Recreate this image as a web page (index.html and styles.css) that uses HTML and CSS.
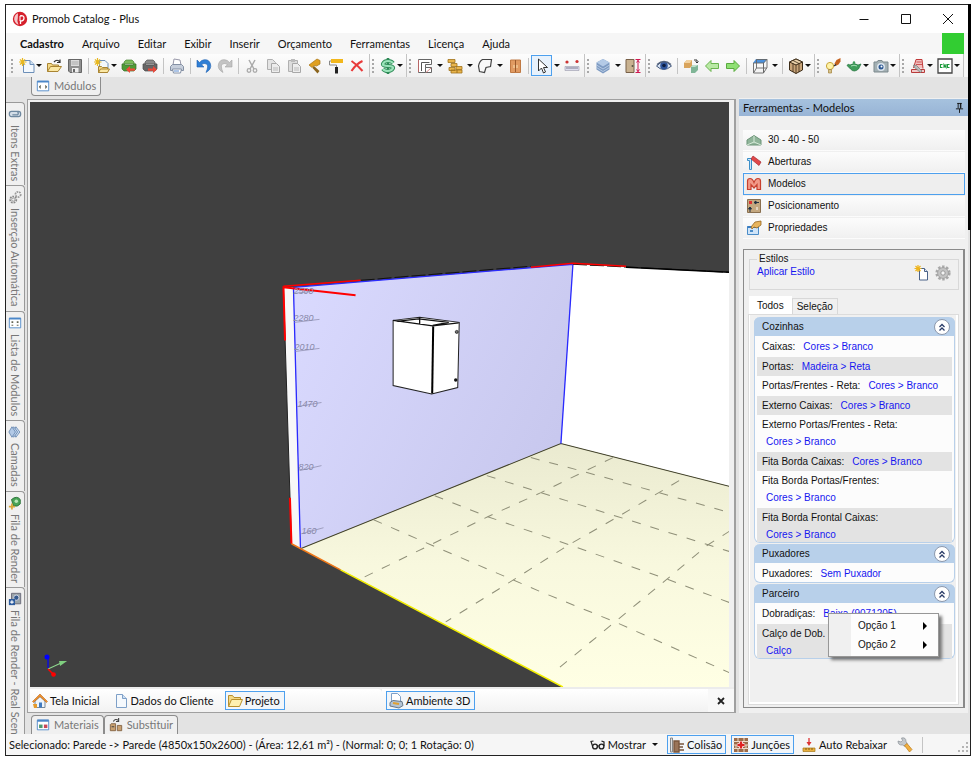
FILE: index.html
```html
<!DOCTYPE html>
<html lang="pt-BR">
<head>
<meta charset="utf-8">
<title>Promob Catalog - Plus</title>
<link rel="stylesheet" href="styles.css">
</head>
<body>
<div class="window">
  <header class="titlebar">
    <svg class="logo" viewBox="0 0 16 16"><circle cx="8" cy="8" r="7.2" fill="#d5202c"/><path d="M6 2.2Q2 4 2.2 8.5Q3 12.500 6.500 13.800Q4.600 10 5.800 7Z" fill="#fff" opacity=".75"/><path d="M8 5q4-1 4 2t-3.500 3v3" fill="none" stroke="#fff" stroke-width="1.300"/><path d="M8 5v5" stroke="#fff" stroke-width="1"/></svg>
    <h1>Promob Catalog - Plus</h1>
    <div class="winbuttons">
      <button aria-label="Minimizar"><svg viewBox="0 0 12 12"><path d="M1.500 6.500h9" stroke="#111"/></svg></button>
      <button aria-label="Maximizar"><svg viewBox="0 0 12 12"><path d="M1.500 1.500h9v9h-9z" fill="none" stroke="#111"/></svg></button>
      <button aria-label="Fechar"><svg viewBox="0 0 12 12"><path d="M1 1l10 10M11 1L1 11" stroke="#111"/></svg></button>
    </div>
  </header>

  <nav class="menubar">
    <button class="current">Cadastro</button><button>Arquivo</button><button>Editar</button><button>Exibir</button><button>Inserir</button><button>Orçamento</button><button>Ferramentas</button><button>Licença</button><button>Ajuda</button>
    <span class="led"></span>
  </nav>

  <div class="toolbar">
    <div class="group">
      <button class="tool split" aria-label="Novo"><svg viewBox="0 0 16 16"><path d="M4.500 2.500h6.500l4 4v8h-10.500z" fill="#f3f8fd" stroke="#6c8fb8"/><path d="M11 2.500v4h4" fill="#cfe0f2" stroke="#6c8fb8"/><path d="M3.500 0v8M-.5 4h8M1 1.300l5 5.400M6 1.300L1 6.700" stroke="#e8b820" stroke-width="1.200"/></svg><i></i></button>
      <button class="tool" aria-label="Abrir"><svg viewBox="0 0 16 16"><path d="M1.500 13.500v-8h4l1 1.500h6v2" fill="#f3d987" stroke="#a98432"/><path d="M1.500 13.500l3-5h11l-3.500 5z" fill="#fbe8a4" stroke="#a98432"/><path d="M8 4q3-3.500 6 0M14 1.500v3h-3" fill="none" stroke="#333" stroke-width="1.200"/></svg></button>
      <button class="tool" aria-label="Salvar"><svg viewBox="0 0 16 16"><path d="M1.500 1.500h13v13H3l-1.500-1.500z" fill="#909090" stroke="#666"/><path d="M4 2h8v6H4z" fill="#ddd"/><path d="M5 10h6.500v4.500H5z" fill="#eee"/><path d="M6 11h2v3H6z" fill="#666"/><path d="M4.500 4h7M4.500 6h7" stroke="#aaa"/></svg></button>
      <span class="sep"></span>
      <button class="tool split" aria-label="Novo projeto"><svg viewBox="0 0 16 16"><path d="M5.500 2.500h5.500l3 3v7h-8.500z" fill="#f3f8fd" stroke="#6c8fb8"/><path d="M4.500 14.500v-6h3l1 1h5v5z" fill="#f3d987" stroke="#a98432"/><path d="M4.500 14.500l2-3.500h9l-2 3.500z" fill="#fbe8a4" stroke="#a98432"/><path d="M3.500 0v8M-.5 4h8M1 1.300l5 5.400M6 1.300L1 6.700" stroke="#e8b820" stroke-width="1.200"/></svg><i></i></button>
      <button class="tool" aria-label="Importar módulo"><svg viewBox="0 0 16 16"><path d="M3 4l2-2h6l2 2v2H3z" fill="#7dbb5c" stroke="#4c8436" stroke-width=".7"/><path d="M1 6q2-1 3 1h8q1-2 3-1v5l-2 2H3l-2-2z" fill="#4f9a36" stroke="#3a7028" stroke-width=".7"/><path d="M14 10.500H9V8l-4 3.500L9 15v-2.300h5z" fill="#f04a3a"/></svg></button>
      <button class="tool" aria-label="Exportar módulo"><svg viewBox="0 0 16 16"><path d="M3 4l2-2h6l2 2v2H3z" fill="#8a8a8a" stroke="#555" stroke-width=".7"/><path d="M1 6q2-1 3 1h8q1-2 3-1v5l-2 2H3l-2-2z" fill="#666" stroke="#4a4a4a" stroke-width=".7"/><path d="M6 10.500h5V8l4 3.500-4 3.500v-2.300H6z" fill="#e8483a"/></svg></button>
      <span class="sep"></span>
      <button class="tool" aria-label="Imprimir"><svg viewBox="0 0 16 16"><path d="M4 7l1-6 6 1 1 5z" fill="#fff" stroke="#99a"/><path d="M1.500 8.500l2-2h9l2 2v4h-13z" fill="#c6cedb" stroke="#8490a4"/><path d="M3.500 11h9l-1 4h-7z" fill="#fff" stroke="#8490a4"/><path d="M5 13h5" stroke="#5a8bd0"/></svg></button>
      <span class="sep"></span>
      <button class="tool" aria-label="Desfazer"><svg viewBox="0 0 16 16"><path d="M1 2v7h7L5.500 6.700Q8 4.500 10.500 6T10 14.500Q16 11 14.500 6T8 1.800Q5.500 2 3.600 4.500z" fill="#2f7fd6" stroke="#1e5fae" stroke-width=".6"/></svg></button>
      <button class="tool" aria-label="Refazer"><svg viewBox="0 0 16 16"><path d="M15 2v7H8l2.500-2.300Q8 4.500 5.500 6T6 14.500Q0 11 1.500 6T8 1.800q2.500.2 4.400 2.700z" fill="#c4c4c4" stroke="#a4a4a4" stroke-width=".6"/></svg></button>
      <span class="sep"></span>
      <button class="tool" aria-label="Recortar"><svg viewBox="0 0 16 16"><path d="M5 2l5 9M11 2l-5 9" stroke="#aaa" stroke-width="1.500"/><circle cx="5" cy="12.500" r="1.800" fill="none" stroke="#aaa" stroke-width="1.300"/><circle cx="11" cy="12.500" r="1.800" fill="none" stroke="#aaa" stroke-width="1.300"/></svg></button>
      <button class="tool" aria-label="Copiar"><svg viewBox="0 0 16 16"><path d="M2.500 1.500h5l3 3v7h-8z" fill="#e4e4e4" stroke="#b0b0b0"/><path d="M6.500 5.500h5l3 3v6h-8z" fill="#ededed" stroke="#a8a8a8"/><path d="M8 10h5M8 12h5" stroke="#bbb"/></svg></button>
      <button class="tool" aria-label="Colar"><svg viewBox="0 0 16 16"><path d="M2.500 2.500h9v11h-9z" fill="#dcdcdc" stroke="#b0b0b0"/><path d="M5 1h4v3H5z" fill="#bbb"/><path d="M6.500 5.500h5l3 3v6h-8z" fill="#ededed" stroke="#a8a8a8"/><path d="M8 10h5M8 12h5" stroke="#bbb"/></svg></button>
      <button class="tool" aria-label="Montar"><svg viewBox="0 0 16 16"><path d="M2 7l8-6 3 1.500V6l-3.500 2-2-.5L5 9.500z" fill="#e0a020" stroke="#a87414" stroke-width=".7"/><path d="M7 8l5.500 5-2 2.500L5.500 10z" fill="#8a641c"/></svg></button>
      <button class="tool" aria-label="Pintar"><svg viewBox="0 0 16 16"><path d="M3 1h12v4H3z" fill="#f2b71c"/><path d="M3 3H1.500v4H8.500v3" fill="none" stroke="#888"/><path d="M7 9h3v6.500H7z" fill="#222"/></svg></button>
      <button class="tool" aria-label="Excluir"><svg viewBox="0 0 16 16"><path d="M2.500 3q6 4 11 10M13.500 3Q7 6 2.500 13" fill="none" stroke="#e83a3a" stroke-width="2"/></svg></button>
    </div>
    <div class="group">
      <button class="tool split" aria-label="Orçamento"><svg viewBox="0 0 16 16"><path d="M13 5.200Q11.500 3 8 3T3.200 5.400 8 8t4.800 2.600T8 13 3 10.800" fill="none" stroke="#2e8a57" stroke-width="4"/><path d="M8 0v16" stroke="#2e8a57" stroke-width="2.600"/><path d="M13 5.200Q11.500 3 8 3T3.200 5.400 8 8t4.800 2.600T8 13 3 10.800" fill="none" stroke="#9be4ba" stroke-width="2.200"/></svg><i></i></button>
    </div>
    <div class="group">
      <button class="tool split wide" aria-label="Paredes"><svg viewBox="0 0 16 16"><path d="M1.500 14.500v-13h13v5h-6v8z" fill="#fff" stroke="#666"/><path d="M4.500 13V4.500h8" fill="none" stroke="#555"/><path d="M8.500 9.500h6v5h-6z" fill="#fff" stroke="#666"/><path d="M1.500 2v12M9 14.500L14 10" stroke="#c66" stroke-width=".8"/></svg><i></i></button>
      <button class="tool split wide" aria-label="Construção"><svg viewBox="0 0 16 16"><path d="M1 1.500h7v3H1zM4 5.500h6v3H4zM2 9.500h6v3H2zM9 8.500h6v3H9zM4 12h11v3H4z" fill="#e9b54c" stroke="#a0721c" stroke-width=".8"/><path d="M10 12v3" stroke="#a0721c"/></svg><i></i></button>
      <button class="tool split wide" aria-label="Polígono"><svg viewBox="0 0 16 16"><path d="M5.500 1.500h9l-1 7-4.500 1-1.500 5-5-1-1-5.500q1-5 4-6.500z" fill="#f8f8f8" stroke="#444" stroke-width="1.200"/></svg><i></i></button>
      <button class="tool" aria-label="Portas"><svg viewBox="0 0 16 16"><path d="M3.500 2h10v12.500h-10z" fill="#e09a62" stroke="#c07a44"/><path d="M8.500 2v12" stroke="#9a5a2c"/><path d="M7 7v3M10 7v3" stroke="#fbe0b0"/></svg></button>
      <span class="sep"></span>
      <button class="tool split wide picked" aria-label="Selecionar"><svg viewBox="0 0 16 16"><path d="M4.500 1v12l3-3 2 5 2-1-2-4.500h4z" fill="#fff" stroke="#333"/></svg><i></i></button>
      <button class="tool" aria-label="Medir"><svg viewBox="0 0 16 16"><path d="M1 8.500h14v4H1z" fill="#dde" stroke="#99a" stroke-width=".6"/><path d="M3 9v2M5 9v2M7 9v2M9 9v2M11 9v2M13 9v2" stroke="#667" stroke-width=".8"/><circle cx="3" cy="4" r="1.600" fill="#c33"/><circle cx="13" cy="3.500" r="1.600" fill="#c33"/></svg></button>
    </div>
    <div class="group">
      <button class="tool split wide" aria-label="Camadas"><svg viewBox="0 0 16 16"><path d="M8 1l6.500 3.500v7L8 15.500l-6.500-4v-7z" fill="#7d9ac2"/><path d="M8 1l6.500 3.500L8 8.500 1.500 4.500z" fill="#b4cae6"/><path d="M1.500 7L8 11l6.500-4M1.500 9.500L8 13.500l6.500-4" fill="none" stroke="#c3d4ea" stroke-width=".8"/></svg><i></i></button>
      <button class="tool" aria-label="Altura de porta"><svg viewBox="0 0 16 16"><path d="M1 1.500h8v13H1z" fill="#c9b290" stroke="#786048"/><circle cx="7.500" cy="8" r="1" fill="#554"/><path d="M13 2v12M10.500 1.500h5M10.500 14.500h5M11.500 4.500L13 2.500l1.500 2M11.500 11.500L13 13.500l1.500-2" fill="none" stroke="#d01850"/></svg></button>
    </div>
    <div class="group">
      <button class="tool" aria-label="Visualizar"><svg viewBox="0 0 16 16"><path d="M.5 8q7-8 15 0-8 7-15 0z" fill="#d7e2f2" stroke="#44597c"/><circle cx="8" cy="7.800" r="3.800" fill="#2e559c"/><circle cx="8" cy="7.500" r="1.800" fill="#0c1d40"/><path d="M1 6.500q7-6 14 0" fill="none" stroke="#53627c" stroke-width="1.300"/></svg></button>
      <span class="sep"></span>
      <button class="tool" aria-label="Trocar módulos"><svg viewBox="0 0 16 16"><path d="M1 5l3-3h5v6l-2 2H1z" fill="#d9a45c"/><path d="M1 5l3-3h5L7 5z" fill="#f2d2a0"/><path d="M8 9l2-2h5v5l-3 3H8z" fill="#7fb596"/><path d="M8 9l2-2h5l-3 2z" fill="#bfe0cc"/><path d="M11 2h3v3M12.500 3.500L14 5l1.500-1.500" fill="none" stroke="#333"/></svg></button>
      <button class="tool" aria-label="Anterior"><svg viewBox="0 0 16 16"><path d="M1.500 8L7 2.500v3h7.500v5H7v3z" fill="#b9e9a4" stroke="#6ab44e"/></svg></button>
      <button class="tool" aria-label="Próximo"><svg viewBox="0 0 16 16"><path d="M14.500 8L9 2.500v3H1.500v5H9v3z" fill="#8fe073" stroke="#5aaa3e"/></svg></button>
      <span class="sep"></span>
      <button class="tool split wide" aria-label="Vista"><svg viewBox="0 0 16 16"><path d="M4 1h11l-3 4H1z" fill="#4a90dc"/><path d="M1.500 5h10v10h-10zM4.500 1.500h10.500v8L11.500 15V5l3.500-3.500M1.500 15L4.500 10H15M4.500 10V1.500" fill="none" stroke="#666" stroke-width=".9"/></svg><i></i></button>
      <span class="sep"></span>
      <button class="tool split" aria-label="Modo de exibição"><svg viewBox="0 0 16 16"><path d="M8 1l6.500 3v8L8 15.500 1.500 12V4z" fill="#c8a478" stroke="#3c2c18"/><path d="M1.500 4L8 7l6.500-3L8 1z" fill="#ecd4ac" stroke="#3c2c18"/><path d="M8 7v8.500M5 2.500L11 5.500v8.500M5 5.500V14" stroke="#3c2c18" stroke-width=".8" fill="none"/></svg><i></i></button>
    </div>
    <div class="group">
      <button class="tool" aria-label="Iluminação"><svg viewBox="0 0 16 16"><circle cx="5" cy="8" r="3.600" fill="#fff3a8" stroke="#c9a53a"/><path d="M3.500 11.500h3V15h-3z" fill="#d8c48c" stroke="#a08038" stroke-width=".7"/><path d="M9.500 5.500l2-3.500 4-2v3.500l-2 3-3 1.500z" fill="#c4621e"/><path d="M9 8l2-1.500" stroke="#333" stroke-width="1.500"/></svg></button>
      <button class="tool split" aria-label="Renderizar"><svg viewBox="0 0 16 16"><path d="M4 7q4-3 8 0l3-1-2.500 5q-4.500 4-8 0L1 7.500q1-2 3-.5z" fill="#3f9d5a" stroke="#23703c" stroke-width=".7"/><circle cx="8" cy="4.500" r="1.200" fill="#3f9d5a"/><path d="M5 8q3-1.500 6 0" stroke="#a6e0b5" fill="none"/></svg><i></i></button>
      <button class="tool split" aria-label="Câmera"><svg viewBox="0 0 16 16"><path d="M1 4h3l1-1.500h4L10 4h5v10H1z" fill="#a3b0b4" stroke="#7d898d"/><circle cx="8" cy="9" r="4" fill="#dde6ee"/><circle cx="8" cy="9" r="2.500" fill="#2e5a94"/><circle cx="8.500" cy="8.500" r="1" fill="#fff"/></svg><i></i></button>
    </div>
    <div class="group">
      <button class="tool split" aria-label="Corte"><svg viewBox="0 0 16 16"><path d="M3.500 10l2.500-8.500h6l1 9" fill="#f4c0c0" stroke="#c03a3a"/><path d="M6.500 4h5M6 6.500h6" stroke="#c03a3a" stroke-width=".8"/><path d="M1.500 11.500h13v3h-13z" fill="#f0c8c8" stroke="#b83a3a"/><path d="M3.500 7l3 .5 5.500 5.500-1.500 1.500-6-5z" fill="#bbb" stroke="#777" stroke-width=".7"/></svg><i></i></button>
      <button class="tool split" aria-label="CNC"><svg viewBox="0 0 16 16"><path d="M1 1h14v14H1z" fill="#fff" stroke="#444" stroke-width="1.300"/><path d="M5.500 6.500h-2v3h2M7 10V6.500L9 9.500V6M12.500 6.500h-2v3h2" fill="none" stroke="#1a9a3a" stroke-width="1.100"/></svg><i></i></button>
    </div>
  </div>

  <div class="toptabs">
    <button class="docktab hang"><svg viewBox="0 0 16 16"><path d="M1.500 2.500h13v11h-13z" fill="#fff" stroke="#4a86c8"/><path d="M1.500 3h13" stroke="#4a86c8" stroke-width="2"/><path d="M5 7v4M4 8v2M11 7v4M12 8v2" stroke="#665"/></svg>Módulos</button>
  </div>

  <main class="workspace">
    <nav class="dock">
      <button><svg viewBox="0 0 16 16"><path d="M4 5h8q2.500 0 2.500 3t-2.500 3H4Q1.500 11 1.500 8T4 5h7q1.500 3 0 4H5" fill="#d4dee8" stroke="#6e88a0" stroke-width="1.400"/></svg>Itens Extras</button>
      <button><svg viewBox="0 0 16 16"><circle cx="6" cy="11" r="3.500" fill="none" stroke="#888" stroke-width="2" stroke-dasharray="2 1"/><circle cx="11.500" cy="5" r="3" fill="none" stroke="#999" stroke-width="2" stroke-dasharray="2 1"/><circle cx="6" cy="11" r="1.800" fill="none" stroke="#999"/></svg>Inserção Automática</button>
      <button><svg viewBox="0 0 16 16"><path d="M1.500 2.500h13v11h-13z" fill="#fff" stroke="#4a86c8"/><path d="M1.500 3h13" stroke="#4a86c8" stroke-width="2"/><path d="M5 6v2M11 6v2M5 10v1M11 10v1" stroke="#665" stroke-width="2"/></svg>Lista de Módulos</button>
      <button><svg viewBox="0 0 16 16"><path d="M9 2l4.500 6L9 14 6 8z" fill="#c9daee" stroke="#6b8cb4"/><path d="M6.500 2L11 8l-4.500 6L3 8z" fill="#bdd1ea" stroke="#6b8cb4"/><path d="M4.500 2L8.500 8l-4 6L1 8z" fill="#b2c9e6" stroke="#6b8cb4"/></svg>Camadas</button>
      <button><svg viewBox="0 0 16 16"><path d="M4 4q6-5 10 0v5q-3 4-8 2z" fill="#49a457" stroke="#256e34"/><circle cx="9.500" cy="6" r="2" fill="#b8e6b8"/><path d="M4.500 8.500v7M1 12h7" stroke="#d8a83a" stroke-width="2"/></svg>Fila de Render</button>
      <button><svg viewBox="0 0 16 16"><path d="M4 1.500h10.500v12H4z" fill="#9aa4a8" stroke="#667"/><circle cx="9.500" cy="6.500" r="3" fill="#345a8c" stroke="#dde"/><path d="M1 8h7v7H1z" fill="#2d5c9e"/><path d="M4.500 9.500v4M2.500 11.500h4" stroke="#fff" stroke-width="1.300"/></svg>Fila de Render - Real Scene</button>
    </nav>

    <section class="viewer">
      <svg class="scene" viewBox="30 102 699 584" preserveAspectRatio="xMinYMin slice">
        <defs>
          <linearGradient id="wall" x1="0" y1="0" x2="1" y2=".5"><stop offset="0" stop-color="#dadaff"/><stop offset="1" stop-color="#c8c8ee"/></linearGradient>
          <linearGradient id="floor" x1="0" y1="0" x2="0" y2="1"><stop offset="0" stop-color="#eaead0"/><stop offset=".5" stop-color="#f8f8de"/><stop offset="1" stop-color="#ffffe4"/></linearGradient>
        </defs>
        <path d="M30 102h699v584H30z" fill="#404040"/>
        <path d="M572 264L729 272V486L560 443z" fill="#fff"/>
        <path d="M283 287h10l7 261-9-5z" fill="#f8f8f8"/>
        <path d="M293 287L572 264 560 443 300 548z" fill="url(#wall)"/>
        <path d="M291 543l9 5L560 443l169 43v200H562z" fill="url(#floor)"/>
        <path d="M300 548L560 443l169 43" fill="none" stroke="#44442c"/>
        <g fill="none" stroke="#8f8f78" stroke-dasharray="9 10">
          <path d="M530 457L583 471 658 492 729 512M486 475L540 492 617 516 707 544 729 551M434 495L487 516 568 544 665 578 729 602M373 519L430 544 540 591 614 621 729 672"/>
          <path d="M612 457L583 471 540 492 487 516 430 544 358 579M678 480L617 516 568 544 500 587 445 621M729 530L707 544 665 579 614 621 552 672"/>
        </g>
        <path d="M293 287L572 264 560 443M293 287L300 548" fill="none" stroke="#2a2aff" stroke-width="1.300"/>
        <path d="M360 280L530 266M572 264L729 272" fill="none" stroke="#111" stroke-dasharray="14 3"/>
        <path d="M625 267L729 272" stroke="#000" stroke-width="1.500"/>
        <path d="M283 286L291 543" stroke="#222"/>
        <path d="M283 286L360 280M530 267L572 263 625 266" fill="none" stroke="#f00" stroke-width="1.500"/>
        <path d="M283 286L284.600 340M289.500 497L291 543M283 287L355 295" fill="none" stroke="#f00" stroke-width="2"/>
        <path d="M291 543L340 569" stroke="#f07818" stroke-width="1.500"/>
        <path d="M340 569L562 686" stroke="#f4f000" stroke-width="1.500"/>
        <g class="measure">
          <text x="293" y="294">2500</text><text x="293" y="321">2280</text><text x="294" y="350">2010</text><text x="297" y="406">1470</text><text x="298" y="469">820</text><text x="301" y="533">160</text>
        </g>
        <path d="M294 293l18-2M294 322l25-3M295 351l24-3M297 406l24-4M299 470l22-5M301 533l22-6" stroke="#9090b0" stroke-width=".8"/>
        <path d="M392.500 320L419 317 458.500 322 457 387 431 393.500 392.500 385z" fill="#fff" stroke="#222"/>
        <path d="M392.500 320L432 325.500 458 322.500M419 317v7M396 321L418 318.500 448 322 432 325" fill="none" stroke="#111" stroke-width="1.300"/>
        <path d="M432.500 326L431.500 393" stroke="#000" stroke-width="2"/>
        <circle cx="456" cy="331.500" r="1.500" fill="#777" stroke="#111" stroke-width=".7"/><circle cx="455" cy="379.500" r="1.700" fill="#111"/>
        <path d="M48 667V656" stroke="#00f" stroke-width="1.200"/><circle cx="47" cy="656" r="2.500" fill="#00f"/>
        <path d="M48 668L61 662" stroke="#8fd88f"/><path d="M59 660l8 0-7 5z" fill="#7fcf7f"/>
        <path d="M48 668L53 673" stroke="#f00" stroke-width="1.500"/><circle cx="53.500" cy="673.500" r="2.300" fill="#f00"/>
      </svg>
      <nav class="viewtabs">
        <div class="tabset first">
          <button><svg viewBox="0 0 16 16"><path d="M3 8v6.500h10V8L8 3.500z" fill="#eef4fa" stroke="#789"/><path d="M.5 8.500L8 1l7.500 7.500-1 1L8 3.500 1.500 9.500z" fill="#f0922c" stroke="#b8651a" stroke-width=".6"/><path d="M7 9.500h3v5H7z" fill="#3f7ac0"/><path d="M1 11h4v4H2z" fill="#e59a2c"/></svg>Tela Inicial</button>
          <button><svg viewBox="0 0 16 16"><path d="M3.500 1.500h6l4 4v9h-10z" fill="#f5f9fd" stroke="#7ea0c8"/><path d="M9.500 1.500v4h4" fill="#cfe0f2" stroke="#7ea0c8"/></svg>Dados do Cliente</button>
          <button class="on"><svg viewBox="0 0 16 16"><path d="M1.500 13.500v-11h4l1.500 2h6.500v3" fill="#f3d987" stroke="#b8902c"/><path d="M1.500 13.500l3-7h11l-3 7z" fill="#fdf0b0" stroke="#b8902c"/></svg>Projeto</button>
        </div>
        <div class="tabset">
          <button class="on"><svg viewBox="0 0 16 16"><path d="M3.500.5h6l3 3v8h-9z" fill="#fff" stroke="#7ea0c8"/><path d="M2 9.500l3-2 9 1 1 4-4 2.500-9-2z" fill="#b3c3d4" stroke="#678"/><path d="M5 10l6 1" stroke="#e0a030" stroke-width="2"/></svg>Ambiente 3D</button>
        </div>
        <button class="closetab" aria-label="Fechar aba"><svg viewBox="0 0 8 8"><path d="M1 1l6 6M7 1L1 7" stroke="#222" stroke-width="1.800"/></svg></button>
      </nav>
    </section>

    <aside class="panel">
      <h2>Ferramentas - Modelos<svg viewBox="0 0 10 12"><path d="M2.500 1.500h5M3.500 1v6M6.500 1v6M1 7.500h8M5 7.500V12" stroke="#111" fill="none"/><path d="M6 1v6" stroke="#111"/></svg></h2>
      <div class="panelbody">
        <div class="modes">
          <button><svg viewBox="0 0 16 16"><path d="M1 13V8l7-4.500L15 8v5z" fill="#8fb499" stroke="#6c9478"/><path d="M8 4v6M1 13l7-3 7 3" stroke="#d6ead8" fill="none"/></svg>30 - 40 - 50</button>
          <button><svg viewBox="0 0 16 16"><path d="M1.500 4.500h4v11h-2v-9h-2z" fill="#cfe6f8" stroke="#3b8fc8"/><path d="M5 5l2-3 8 6-2 3.500z" fill="#e0484a" stroke="#a82a30" stroke-width=".7"/></svg>Aberturas</button>
          <button class="on"><svg viewBox="0 0 16 16"><path d="M1.500 13.500V5q0-2.500 2.500-2.500t4 4q1.500-4 4-4T14.500 5v8.500h-3.500V8.500L8 12 5 8.500v5z" fill="#f29a88" stroke="#c8402e" stroke-width="1.200"/></svg>Modelos</button>
          <button><svg viewBox="0 0 16 16"><path d="M1.500 1.500h13v13h-13z" fill="#c4a880" stroke="#8a7050"/><path d="M4 9v5M8 4.500h5M4 9l-1.500 2h3zM8 4.500L10 3v3z" stroke="#234" fill="#234"/><path d="M3 3h3v3H3z" fill="#d33"/><path d="M11 9v3" stroke="#fff"/></svg>Posicionamento</button>
          <button><svg viewBox="0 0 16 16"><path d="M1.500 6.500h11v8h-11z" fill="#cfe4f8" stroke="#4a8cc8"/><path d="M1.500 7h11" stroke="#3a7cc0" stroke-width="2"/><path d="M5 7l4-5 6-1v4l-4 3-3-1-2 2z" fill="#e8b45c" stroke="#946420" stroke-width=".8"/><path d="M4 10h3v2H4z" fill="#4a8cc8"/></svg>Propriedades</button>
        </div>
        <div class="styles">
          <fieldset>
            <legend>Estilos</legend>
            <a href="#estilo">Aplicar Estilo</a>
            <span class="styleicons">
              <button aria-label="Novo estilo"><svg viewBox="0 0 16 16"><path d="M5.500 3.500h5l3 3v8.500h-8z" fill="#fff" stroke="#4a6288"/><path d="M10.500 3.500v3h3" fill="#dde8f4" stroke="#4a6288"/><path d="M4 0v7M.5 3.500h7M1.500 1l5 5M6.500 1l-5 5" stroke="#eeb41c" stroke-width="1.200"/></svg></button>
              <button aria-label="Configurar"><svg viewBox="0 0 16 16"><circle cx="8" cy="8" r="6.300" fill="none" stroke="#a8a8a8" stroke-width="2.600" stroke-dasharray="2.400 1.600"/><circle cx="8" cy="8" r="5.400" fill="#c4c4c4" stroke="#9a9a9a" stroke-width=".8"/><circle cx="8" cy="8" r="2.200" fill="#f4f4f4" stroke="#999"/></svg></button>
            </span>
          </fieldset>
          <div class="subtabs"><button class="on">Todos</button><button>Seleção</button></div>
          <div class="page">
            <section class="card">
              <h3>Cozinhas<button aria-label="Recolher"><svg viewBox="0 0 8 8"><path d="M1.500 4L4 1.500 6.500 4M1.500 7.500L4 5l2.500 2.500" fill="none" stroke="#2a3c68" stroke-width="1.300"/></svg></button></h3>
              <p>Caixas:<a href="#c1">Cores &gt; Branco</a></p>
              <p>Portas:<a href="#c2">Madeira &gt; Reta</a></p>
              <p>Portas/Frentes - Reta:<a href="#c3">Cores &gt; Branco</a></p>
              <p>Externo Caixas:<a href="#c4">Cores &gt; Branco</a></p>
              <p class="tall">Externo Portas/Frentes - Reta:<a href="#c5">Cores &gt; Branco</a></p>
              <p>Fita Borda Caixas:<a href="#c6">Cores &gt; Branco</a></p>
              <p class="tall">Fita Borda Portas/Frentes:<a href="#c7">Cores &gt; Branco</a></p>
              <p class="tall">Fita Borda Frontal Caixas:<a href="#c8">Cores &gt; Branco</a></p>
            </section>
            <section class="card">
              <h3>Puxadores<button aria-label="Recolher"><svg viewBox="0 0 8 8"><path d="M1.500 4L4 1.500 6.500 4M1.500 7.500L4 5l2.500 2.500" fill="none" stroke="#2a3c68" stroke-width="1.300"/></svg></button></h3>
              <p>Puxadores:<a href="#p1">Sem Puxador</a></p>
            </section>
            <section class="card">
              <h3>Parceiro<button aria-label="Recolher"><svg viewBox="0 0 8 8"><path d="M1.500 4L4 1.500 6.500 4M1.500 7.500L4 5l2.500 2.500" fill="none" stroke="#2a3c68" stroke-width="1.300"/></svg></button></h3>
              <p>Dobradiças:<a href="#d1">Baixa (9071205)</a></p>
              <p class="tall">Calço de Dob.<a href="#d2">Calço</a></p>
              <div class="popup"><button>Opção 1<i></i></button><button>Opção 2<i></i></button></div>
            </section>
          </div>
        </div>
      </div>
    </aside>
  </main>

  <div class="bottomtabs">
    <button class="docktab"><svg viewBox="0 0 16 16"><path d="M1.500 2.500h13v11h-13z" fill="#fff" stroke="#4a86c8"/><path d="M1.500 3h13" stroke="#4a86c8" stroke-width="2.500"/><path d="M3.500 7.500h4v4h-4z" fill="#4c9a70"/><path d="M9 7.500h4v4H9z" fill="#c8485a"/></svg>Materiais</button><button class="docktab"><svg viewBox="0 0 16 16"><path d="M1.500 7.500l1-1h5v8h-6zM9.500 8.500h5v6h-5z" fill="#c8a070" stroke="#806040"/><path d="M3 10h3M5 4q2-4 6-1M11 0v4H8" fill="none" stroke="#444" stroke-width="1.300"/></svg>Substituir</button>
  </div>

  <footer class="statusbar">
    <span class="message">Selecionado: Parede -&gt; Parede (4850x150x2600) - (Área: 12,61 m²) - (Normal: 0; 0; 1 Rotação: 0)</span>
    <button class="show"><svg viewBox="0 0 16 16"><circle cx="5" cy="9.500" r="2.400" fill="none" stroke="#222" stroke-width="1.400"/><circle cx="11.500" cy="9.500" r="2.400" fill="none" stroke="#222" stroke-width="1.400"/><path d="M2.500 9L1 4.500l2.500-.5M14 9V5l-2.500-1M7 9h2" fill="none" stroke="#222" stroke-width="1.200"/></svg>Mostrar<i></i></button>
    <button class="on"><svg viewBox="0 0 16 16"><path d="M1.500 1v14h2V1z" fill="#ddd" stroke="#888"/><path d="M5 4h5v11H5zM10 7h5M10 10h4M10 13h5" fill="#9a7458" stroke="#7a563c" stroke-width="1.400"/></svg>Colisão</button>
    <button class="on"><svg viewBox="0 0 16 16"><path d="M1 1h14v14H1z" fill="#9c6a48"/><path d="M0 4.500h16M0 8h16M0 11.500h16M5 1v3.500M11 1v3.500M3 11.500V8M13 11.500V8M5 15v-3.500M11 15v-3.500" stroke="#eadccc"/><path d="M8 4.500v7M4.500 8h7" stroke="#fff" stroke-width="4"/><path d="M8 4.500v7M4.500 8h7" stroke="#e02020" stroke-width="2.400"/></svg>Junções</button>
    <button><svg viewBox="0 0 16 16"><path d="M8 1v6" stroke="#d33" stroke-width="1.300"/><path d="M5.500 5h5L8 9z" fill="#d33"/><path d="M2 11h12v3.500H2z" fill="#e8b040" stroke="#a87818" stroke-width=".7"/><path d="M5 11v2M8 11v2M11 11v2" stroke="#865c10"/></svg>Auto Rebaixar</button>
    <button class="wrench" aria-label="Opções"><svg viewBox="0 0 16 16"><path d="M1 4l3 1 1.500-1.500L4.500 1Q9 0 9 4.500L10.500 7 8 9.500 5.500 8Q1 8.500 1 4z" fill="#c4c8cc" stroke="#8a9096" stroke-width=".7"/><path d="M7.500 8.500L10 6.500l5 6-2.500 2.500z" fill="#f2b040" stroke="#b87818" stroke-width=".7"/></svg></button>
    <span class="sep"></span>
    <svg class="grip" viewBox="0 0 12 12"><path d="M8 1h2v2H8zM8 5h2v2H8zM4 5h2v2H4zM8 9h2v2H8zM4 9h2v2H4zM0 9h2v2H0z" fill="#b4b4b4"/></svg>
  </footer>
</div>
</body>
</html>
```

FILE: styles.css
```css
* { box-sizing: border-box; margin: 0; padding: 0; }

body {
  display: flex;
  height: 100vh;
  padding: 4px 3px 4px 5px;
  background: #fff;
  color: #111;
  font: 11px/16px Lato, "Open Sans", sans-serif;
}

button {
  border: 1px solid transparent;
  background: none;
  color: inherit;
  font: inherit;
  white-space: nowrap;
}

h1, h2, h3, .message { white-space: nowrap; }
svg { display: block; flex: none; }
button svg { width: 16px; height: 16px; }
a { color: #1616f0; text-decoration: none; }

.window {
  position: relative;
  display: flex;
  flex: 1;
  flex-direction: column;
  min-width: 0;
  border: 1px solid #222;
  background: #e3e3e3;
}

.window::after {
  content: "";
  position: absolute;
  top: -1px;
  right: -1px;
  width: 3px;
  height: 226px;
  background: #000;
}

/* Title bar and menu */
.titlebar { display: flex; align-items: center; height: 28px; padding-left: 6px; background: #fff; }
.logo { width: 16px; height: 16px; margin-right: 4px; }
.titlebar h1 { flex: 1; font-size: 11px; font-weight: 400; }
.winbuttons { display: flex; padding-right: 1px; }
.winbuttons button { display: grid; place-items: center; width: 42px; height: 26px; }
.winbuttons svg { width: 12px; height: 12px; }

.menubar { display: flex; align-items: center; height: 21px; padding: 0 6px 0 5px; background: #f6f6f6; }
.menubar button { padding: 0 8px; }
.menubar .current { font-weight: 700; }
.led { width: 22px; height: 22px; margin-left: auto; background: #32cd32; }

/* Toolbar */
.toolbar { display: flex; height: 23px; padding-left: 3px; background: #f8f8f8; }

.group {
  display: flex;
  align-items: center;
  padding-right: 2px;
  border-right: 1px solid #c4c4c4;
  background: linear-gradient(#fdfdfd, #f0f0f0);
}

.group::before {
  content: "";
  width: 7px;
  height: 16px;
  background: radial-gradient(circle at 3px 2px, #a8a8a8 1px, transparent 1px) 0 0 / 7px 4px;
}

.tool { display: flex; align-items: center; width: 21px; height: 21px; padding: 0 2px; }
.split { gap: 1px; width: 27px; }
.split.wide { gap: 4px; width: 30px; }
.picked { background: linear-gradient(#4da0ee, #4da0ee) 0 0 / 21px 1px no-repeat, linear-gradient(#4da0ee, #4da0ee) 0 100% / 21px 1px no-repeat, linear-gradient(#4da0ee, #4da0ee) 0 0 / 1px 100% no-repeat, linear-gradient(#4da0ee, #4da0ee) 20px 0 / 1px 100% no-repeat, linear-gradient(#e8f2fc, #e8f2fc) 0 0 / 21px 100% no-repeat; background-origin: border-box; }

.tool i, .show i {
  flex: none;
  border: 3px solid transparent;
  border-top-color: #111;
  border-bottom: 0;
}

.sep { width: 1px; height: 16px; margin: 0 2px 0 3px; background: #c4c4c4; }

/* Tabs around the workspace */
.toptabs { display: flex; height: 21px; padding-left: 25px; }
.bottomtabs { display: flex; align-items: flex-end; height: 21px; padding-left: 25px; }

.docktab {
  display: flex;
  align-items: center;
  gap: 4px;
  height: 19px;
  padding: 0 4px;
  border: 1px solid #8c8c8c;
  border-bottom: 0;
  border-radius: 4px 4px 0 0;
  background: #f0f0f0;
  color: #777;
}

.docktab svg { width: 14px; height: 14px; }
.hang { border-top: 0; border-bottom: 1px solid #8c8c8c; border-radius: 0 0 4px 4px; }

.workspace {
  display: grid;
  grid-template-columns: 20px minmax(0, 1fr) 230px;
  flex: 1;
  min-height: 0;
  padding-right: 2px;
}

.dock { display: flex; flex-direction: column; min-height: 0; height: calc(100% + 21px); padding-top: 4px; overflow: hidden; }

.dock button {
  display: flex;
  flex: none;
  align-items: center;
  gap: 4px;
  width: 19px;
  padding: 4px 0;
  border: 1px solid #999;
  border-left: 0;
  border-bottom: 0;
  border-radius: 0 4px 0 0;
  background: #f0f0f0;
  color: #777;
  writing-mode: vertical-rl;
}

.dock svg { width: 14px; height: 14px; }

/* 3D view */
.viewer {
  display: flex;
  flex-direction: column;
  min-width: 0;
  min-height: 0;
  margin: 1px 2px 0 1px;
  padding: 2px 0 0 2px;
  border: 1px solid #a0a0a0;
  border-right-width: 2px;
  background: #f0f0f0;
}

.scene { flex: 1; width: calc(100% - 5px); min-height: 0; }
.measure { fill: #8888a8; font: italic 9px "Liberation Sans", sans-serif; }

.viewtabs { display: flex; align-items: center; height: 25px; padding-top: 2px; background: #ececec; }
.tabset { display: flex; flex: 1; align-items: center; height: 23px; padding-left: 4px; background: linear-gradient(#fff, #f2f2f2); }
.tabset.first { flex: none; gap: 6px; width: 50%; padding-left: 0; border-radius: 0 4px 0 0; }
.viewtabs button { display: flex; align-items: center; gap: 2px; height: 19px; padding: 0 4px 0 1px; }
.viewtabs .on, .statusbar .on { border-color: #4da0ee; background: #f2f6fa; }
.viewtabs .closetab { height: 23px; padding: 0 8px; background: #f8f8f8; }
.closetab svg { width: 8px; height: 8px; }

/* Tools panel */
.panel { display: flex; flex-direction: column; min-width: 0; background: #f0f0f0; margin-left: 1px; }

.panel h2 {
  display: flex;
  align-items: center;
  justify-content: space-between;
  height: 17px;
  margin-top: 1px;
  padding: 0 4px;
  background: linear-gradient(#a6c2de, #98b4d6);
  font-size: 11px;
  font-weight: 400;
}

.panel h2 svg { width: 9px; height: 11px; }

.panelbody {
  display: flex;
  flex: 1;
  flex-direction: column;
  min-height: 0;
  padding: 13px 3px 5px 4px;
  font: 10px/16px "Liberation Sans", Arial, sans-serif;
}

.modes { display: grid; grid-auto-rows: 22px; }
.modes button { display: flex; align-items: center; gap: 6px; padding: 0 2px; background: linear-gradient(#fcfcfc, #f0f0f0); }
.modes .on { border-color: #4da0ee; background: #eee; }

.styles {
  display: flex;
  flex: 1;
  flex-direction: column;
  margin-top: 10px;
  padding: 3px 4px 3px 5px;
  border: 2px solid #8a8a8a;
  border-width: 1px 2px 1px 1px;
}

.styles fieldset { display: flex; min-width: 0; height: 37px; padding: 0 7px; border: 1px solid #d8d8d8; }
.styles legend { height: 12px; padding: 0 2px; line-height: 12px; }
.styles fieldset a { line-height: 13px; }
.styleicons { display: flex; gap: 5px; margin-left: auto; }
.styleicons button { height: 16px; border: 0; }

.subtabs { display: flex; align-items: flex-end; height: 25px; }
.subtabs button { height: 17px; padding: 0 4px; border: 1px solid #d8d8d8; border-bottom: 0; }
.subtabs .on { height: 19px; padding: 0 7px; border-color: #fff; background: #fff; }

.page { flex: 1; padding: 2px 1px 0 4px; border: 1px solid #fff; border-width: 0 2px 2px 1px; outline: 1px solid #dcdcdc; margin-right: 1px; }

.card { position: relative; margin-bottom: 1px; padding: 0 2px; border: 1px solid #b8d0ea; border-top: 0; border-radius: 6px; background: #fcfcfc; }

.card h3 {
  display: flex;
  align-items: center;
  justify-content: space-between;
  height: 19px;
  margin: 0 -3px 1px;
  padding: 0 5px 0 8px;
  border-radius: 6px 6px 0 0;
  background: #b8d0ea;
  font-size: 10px;
  font-weight: 400;
}

.card h3 button { display: grid; place-items: center; width: 16px; height: 16px; border: 1px solid #8c98ac; border-radius: 50%; background: #fff; }
.card h3 svg { width: 8px; height: 8px; }

.card p { display: flex; gap: 8px; height: 20px; padding: 2px 5px 0; white-space: nowrap; }
.card p:nth-of-type(even) { height: 19px; background: #e3e3e3; }
.card p:last-of-type { height: 18px; }
.card .tall, .card .tall:nth-of-type(even) { flex-direction: column; gap: 1px; height: 37px; }
.card .tall:last-of-type:nth-of-type(even) { height: 34px; }
.tall a { padding-left: 4px; }

.popup {
  position: absolute;
  top: 29px;
  right: 15px;
  z-index: 1;
  width: 111px;
  padding: 2px;
  border: 1px solid #979797;
  background: linear-gradient(90deg, #f0f0f0 22px, #fdfdfd 22px);
  box-shadow: 3px 3px 3px #777;
}

.popup button { display: flex; align-items: center; justify-content: space-between; width: 100%; height: 19px; padding: 0 8px 0 26px; }
.popup i { border: 4px solid transparent; border-left-color: #000; border-right: 0; }

/* Status bar */
.statusbar { display: flex; align-items: center; gap: 5px; height: 21px; padding-left: 3px; background: #f6f6f6; }
.message { flex: 1; min-width: 0; }
.statusbar button { display: flex; align-items: center; gap: 2px; height: 19px; padding: 0 3px 0 1px; }
.statusbar .show i { margin-left: 4px; }
.statusbar .wrench { padding: 0; }
.statusbar .grip { width: 12px; height: 12px; margin: 4px 0 0 28px; }
```
